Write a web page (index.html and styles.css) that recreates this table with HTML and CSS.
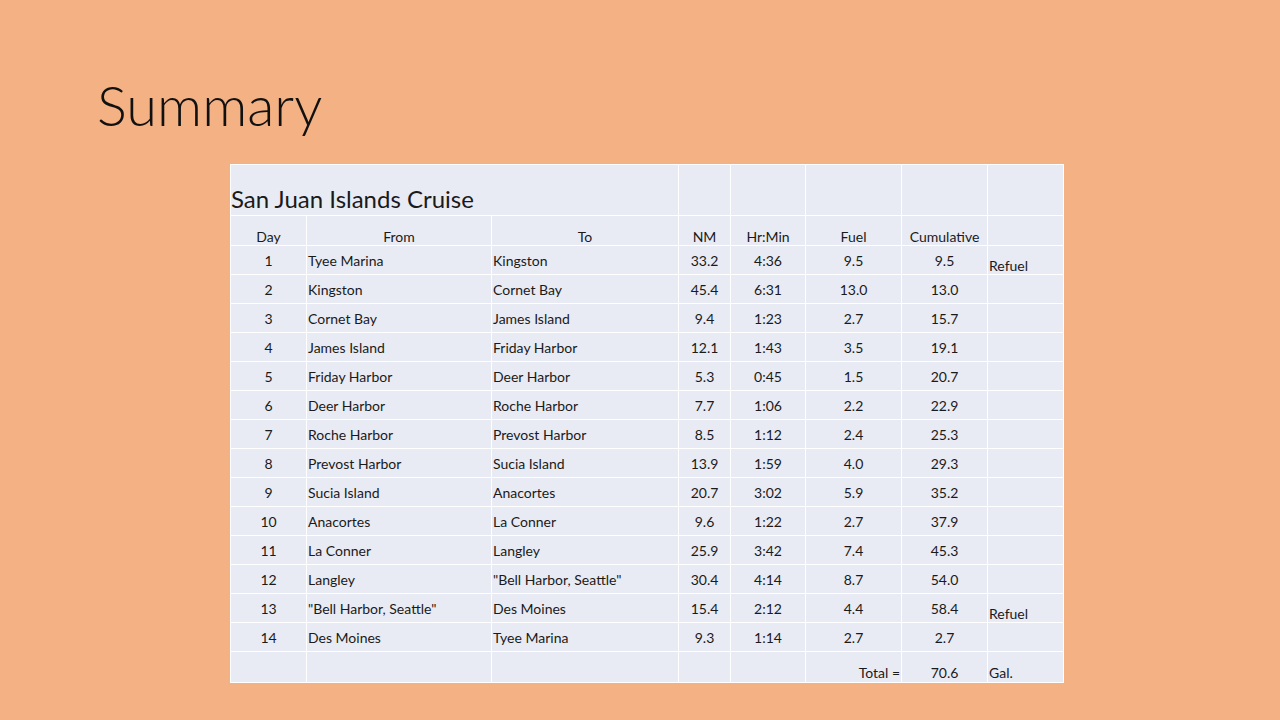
FILE: index.html
```html
<!DOCTYPE html>
<html>
<head>
<meta charset="utf-8">
<link rel="stylesheet" href="styles.css">
</head>
<body>
<div class="slide">
  <h1 class="title">Summary</h1>
  <table class="cruise">
    <colgroup>
      <col class="c-day"><col class="c-from"><col class="c-to"><col class="c-nm"><col class="c-hr"><col class="c-fuel"><col class="c-cum"><col class="c-note">
    </colgroup>
    <tr class="r-title">
      <td colspan="3" class="caption">San Juan Islands Cruise</td>
      <td></td><td></td><td></td><td></td><td></td>
    </tr>
    <tr class="r-head">
      <td class="ctr">Day</td><td class="ctr">From</td><td class="ctr">To</td><td class="ctr">NM</td><td class="ctr">Hr:Min</td><td class="ctr">Fuel</td><td class="ctr">Cumulative</td><td></td>
    </tr>
    <tr><td class="ctr">1</td><td>Tyee Marina</td><td>Kingston</td><td class="ctr">33.2</td><td class="ctr">4:36</td><td class="ctr">9.5</td><td class="ctr">9.5</td><td class="note">Refuel</td></tr>
    <tr><td class="ctr">2</td><td>Kingston</td><td>Cornet Bay</td><td class="ctr">45.4</td><td class="ctr">6:31</td><td class="ctr">13.0</td><td class="ctr">13.0</td><td></td></tr>
    <tr><td class="ctr">3</td><td>Cornet Bay</td><td>James Island</td><td class="ctr">9.4</td><td class="ctr">1:23</td><td class="ctr">2.7</td><td class="ctr">15.7</td><td></td></tr>
    <tr><td class="ctr">4</td><td>James Island</td><td>Friday Harbor</td><td class="ctr">12.1</td><td class="ctr">1:43</td><td class="ctr">3.5</td><td class="ctr">19.1</td><td></td></tr>
    <tr><td class="ctr">5</td><td>Friday Harbor</td><td>Deer Harbor</td><td class="ctr">5.3</td><td class="ctr">0:45</td><td class="ctr">1.5</td><td class="ctr">20.7</td><td></td></tr>
    <tr><td class="ctr">6</td><td>Deer Harbor</td><td>Roche Harbor</td><td class="ctr">7.7</td><td class="ctr">1:06</td><td class="ctr">2.2</td><td class="ctr">22.9</td><td></td></tr>
    <tr><td class="ctr">7</td><td>Roche Harbor</td><td>Prevost Harbor</td><td class="ctr">8.5</td><td class="ctr">1:12</td><td class="ctr">2.4</td><td class="ctr">25.3</td><td></td></tr>
    <tr><td class="ctr">8</td><td>Prevost Harbor</td><td>Sucia Island</td><td class="ctr">13.9</td><td class="ctr">1:59</td><td class="ctr">4.0</td><td class="ctr">29.3</td><td></td></tr>
    <tr><td class="ctr">9</td><td>Sucia Island</td><td>Anacortes</td><td class="ctr">20.7</td><td class="ctr">3:02</td><td class="ctr">5.9</td><td class="ctr">35.2</td><td></td></tr>
    <tr><td class="ctr">10</td><td>Anacortes</td><td>La Conner</td><td class="ctr">9.6</td><td class="ctr">1:22</td><td class="ctr">2.7</td><td class="ctr">37.9</td><td></td></tr>
    <tr><td class="ctr">11</td><td>La Conner</td><td>Langley</td><td class="ctr">25.9</td><td class="ctr">3:42</td><td class="ctr">7.4</td><td class="ctr">45.3</td><td></td></tr>
    <tr><td class="ctr">12</td><td>Langley</td><td>"Bell Harbor, Seattle"</td><td class="ctr">30.4</td><td class="ctr">4:14</td><td class="ctr">8.7</td><td class="ctr">54.0</td><td></td></tr>
    <tr><td class="ctr">13</td><td>"Bell Harbor, Seattle"</td><td>Des Moines</td><td class="ctr">15.4</td><td class="ctr">2:12</td><td class="ctr">4.4</td><td class="ctr">58.4</td><td class="note">Refuel</td></tr>
    <tr><td class="ctr">14</td><td>Des Moines</td><td>Tyee Marina</td><td class="ctr">9.3</td><td class="ctr">1:14</td><td class="ctr">2.7</td><td class="ctr">2.7</td><td></td></tr>
    <tr class="r-total"><td></td><td></td><td></td><td></td><td></td><td class="rgt">Total =</td><td class="ctr">70.6</td><td>Gal.</td></tr>
  </table>
</div>
</body>
</html>
```

FILE: styles.css
```css
html, body {
  margin: 0;
  padding: 0;
}
body {
  width: 1280px;
  height: 720px;
  background: #f4b183;
  overflow: hidden;
  font-family: "Lato", "Open Sans", sans-serif;
  color: #1a1a1a;
}
.slide {
  padding: 72px 0 0 97px;
}
.title {
  margin: 0;
  font-family: "Lato", sans-serif;
  font-weight: 300;
  font-size: 56px;
  line-height: 66px;
  color: #111;
  letter-spacing: 0;
}
.cruise {
  margin: 26px 0 0 133px;
  border-collapse: collapse;
  table-layout: fixed;
  width: 834px;
  background: #e9ebf4;
  border: 1px solid #f8f9fc;
  font-size: 14px;
}
.c-day { width: 76px; }
.c-from { width: 185px; }
.c-to { width: 187px; }
.c-nm { width: 52px; }
.c-hr { width: 75px; }
.c-fuel { width: 96px; }
.c-cum { width: 86px; }
.c-note { width: 76px; }
.cruise td {
  border: 1px solid #ffffff;
  padding: 0 1px;
  height: 28px;
  white-space: nowrap;
  overflow: hidden;
  vertical-align: middle;
}
.cruise .r-title td {
  height: 48px;
  vertical-align: bottom;
  padding-bottom: 2px;
}
.cruise .r-title td.caption {
  font-size: 24px;
  padding-left: 0;
}
.cruise .r-head td {
  height: 29px;
  vertical-align: bottom;
  padding-bottom: 0;
}
.cruise .r-total td {
  height: 29px;
  vertical-align: bottom;
  padding-bottom: 1px;
}
.cruise td.note {
  vertical-align: bottom;
  padding-bottom: 0;
}
.ctr { text-align: center; }
.rgt { text-align: right; }
```
